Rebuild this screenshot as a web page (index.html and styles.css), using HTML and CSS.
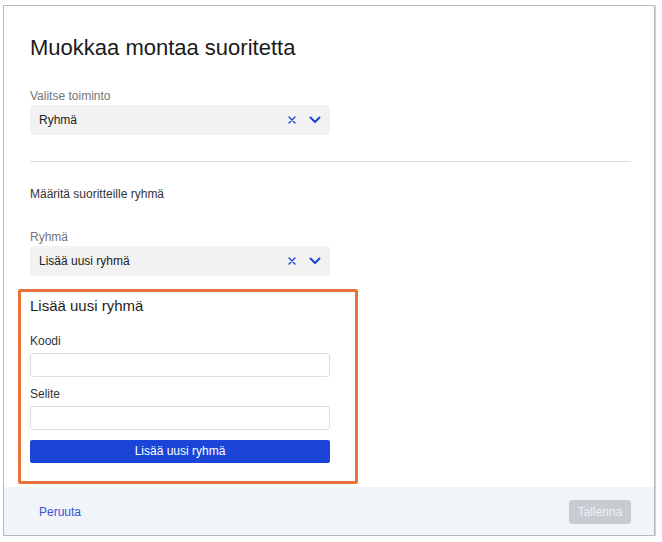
FILE: index.html
```html
<!DOCTYPE html>
<html lang="fi">
<head>
<meta charset="utf-8">
<title>Muokkaa montaa suoritetta</title>
<link rel="stylesheet" href="styles.css">
</head>
<body>
<div class="modal">
  <div class="modal-body">
    <h1 class="title">Muokkaa montaa suoritetta</h1>

    <div class="label label-first">Valitse toiminto</div>
    <div class="select">
      <span class="select-value">Ryhmä</span>
      <span class="select-icons">
        <svg class="icon-x" width="8" height="8" viewBox="0 0 8 8"><path d="M1 1L7 7M7 1L1 7" stroke="#1c44d4" stroke-width="1.4" fill="none" stroke-linecap="round"/></svg>
        <svg class="icon-chev" width="12" height="8" viewBox="0 0 12 8"><path d="M1.5 1.5L6 6L10.5 1.5" stroke="#1c44d4" stroke-width="2" fill="none" stroke-linecap="round" stroke-linejoin="round"/></svg>
      </span>
    </div>

    <hr class="divider">

    <div class="section-text">Määritä suoritteille ryhmä</div>

    <div class="label label-second">Ryhmä</div>
    <div class="select">
      <span class="select-value">Lisää uusi ryhmä</span>
      <span class="select-icons">
        <svg class="icon-x" width="8" height="8" viewBox="0 0 8 8"><path d="M1 1L7 7M7 1L1 7" stroke="#1c44d4" stroke-width="1.4" fill="none" stroke-linecap="round"/></svg>
        <svg class="icon-chev" width="12" height="8" viewBox="0 0 12 8"><path d="M1.5 1.5L6 6L10.5 1.5" stroke="#1c44d4" stroke-width="2" fill="none" stroke-linecap="round" stroke-linejoin="round"/></svg>
      </span>
    </div>

    <div class="new-group">
      <h2 class="new-title">Lisää uusi ryhmä</h2>
      <div class="field-label field-first">Koodi</div>
      <div class="input"></div>
      <div class="field-label field-second">Selite</div>
      <div class="input"></div>
      <div class="primary-btn">Lisää uusi ryhmä</div>
    </div>
  </div>

  <div class="modal-footer">
    <span class="cancel">Peruuta</span>
    <span class="save">Tallenna</span>
  </div>
</div>
</body>
</html>
```

FILE: styles.css
```css
* {
  box-sizing: border-box;
}

html, body {
  margin: 0;
  padding: 0;
  background: #ffffff;
}

body {
  font-family: "Liberation Sans", Arial, sans-serif;
  color: #222222;
}

.modal {
  margin: 5px 0 0 3px;
  width: 652px;
  border: 1px solid #b9b9b9;
  box-shadow: 1px 1px 1px rgba(0, 0, 0, 0.18);
  background: #ffffff;
  display: flex;
  flex-direction: column;
}

.modal-body {
  padding: 30px 23px 0 26px;
  display: flex;
  flex-direction: column;
}

.title {
  margin: 0;
  font-size: 22px;
  line-height: 24px;
  font-weight: normal;
  color: #1b1b1b;
}

.label {
  font-size: 12px;
  line-height: 16px;
  color: #747474;
}

.label-first {
  margin-top: 28px;
}

.label-second {
  margin-top: 27px;
}

.select {
  margin-top: 1px;
  width: 300px;
  height: 30px;
  background: #f2f2f2;
  border-radius: 4px;
  display: flex;
  align-items: center;
  justify-content: space-between;
  padding: 0 9px 0 9px;
}

.select-value {
  font-size: 12px;
  color: #222222;
}

.select-icons {
  display: flex;
  align-items: center;
  gap: 13px;
}

.icon-x {
  display: block;
}

.icon-chev {
  display: block;
  margin-top: 0;
}

.divider {
  margin: 26px 0 0 0;
  border: 0;
  border-top: 1px solid #dcdcdc;
  height: 0;
}

.section-text {
  margin-top: 24px;
  font-size: 12px;
  line-height: 16px;
  color: #333333;
}

.new-group {
  margin: 13px 0 3px -12px;
  width: 340px;
  border: 3px solid #e8733a;
  border-radius: 2px;
  padding: 5px 25px 18px 9px;
  display: flex;
  flex-direction: column;
}

.new-title {
  margin: 0;
  font-size: 15px;
  line-height: 18px;
  font-weight: normal;
  color: #1e1e1e;
}

.field-label {
  font-size: 12px;
  line-height: 16px;
  color: #333333;
}

.field-first {
  margin-top: 18px;
}

.field-second {
  margin-top: 9px;
}

.input {
  margin-top: 4px;
  width: 300px;
  height: 24px;
  border: 1px solid #dedede;
  border-radius: 3px;
  background: #ffffff;
}

.primary-btn {
  margin-top: 10px;
  width: 300px;
  height: 23px;
  background: #1b45d8;
  border-radius: 2px;
  color: #ffffff;
  font-size: 12px;
  line-height: 23px;
  text-align: center;
}

.modal-footer {
  height: 48px;
  background: #f1f4f9;
  display: flex;
  align-items: center;
  justify-content: space-between;
  padding: 1px 23px 0 35px;
}

.cancel {
  font-size: 12px;
  color: #3557d6;
}

.save {
  width: 62px;
  height: 24px;
  background: #c8ccd2;
  border-radius: 3px;
  color: #eff1f4;
  font-size: 12px;
  line-height: 24px;
  text-align: center;
}
```
